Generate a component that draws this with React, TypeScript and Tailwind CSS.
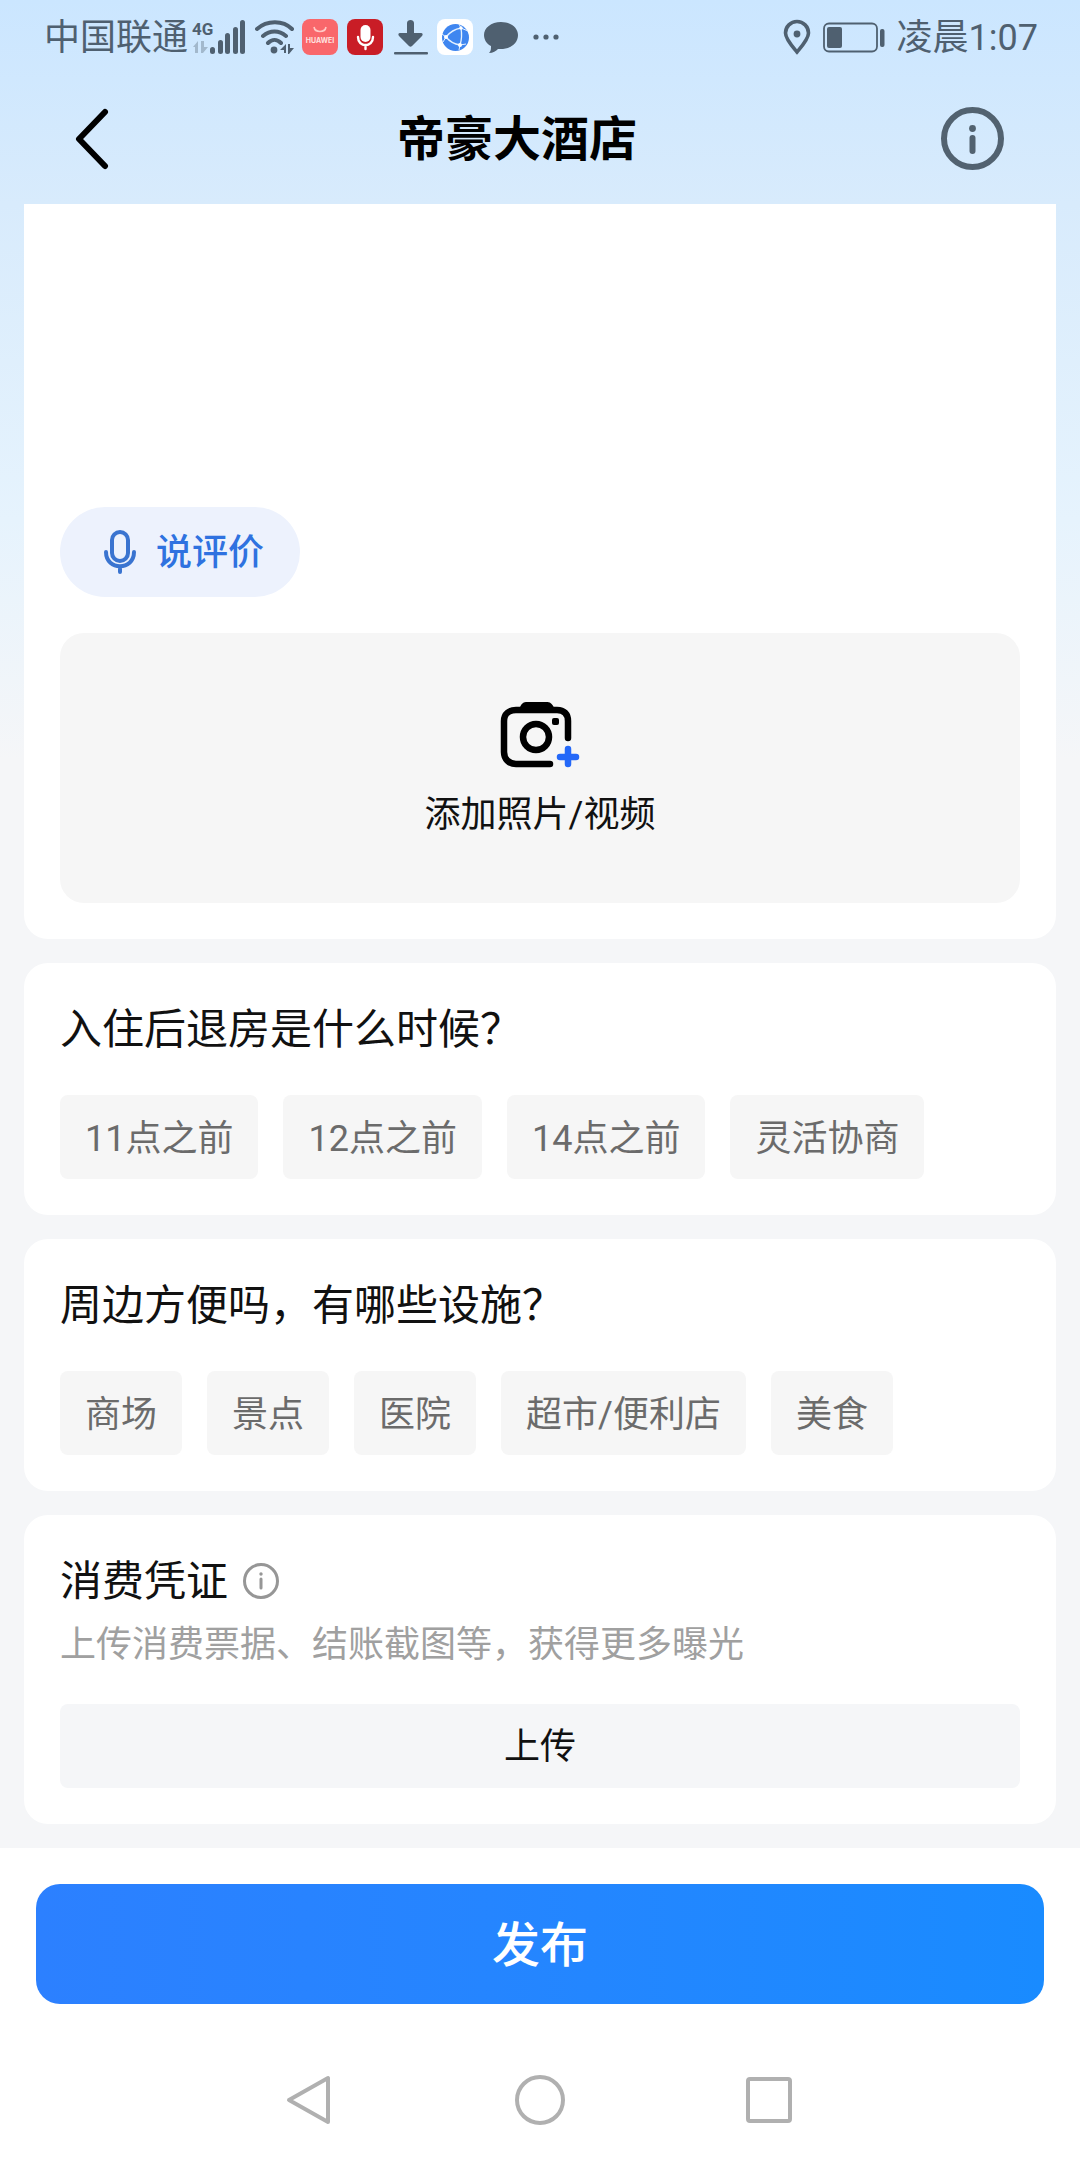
import { useState } from 'react';
import type { ReactNode } from 'react';

const checkoutOptions = ['11点之前', '12点之前', '14点之前', '灵活协商'];
const facilityOptions = ['商场', '景点', '医院', '超市/便利店', '美食'];

function StatusBar() {
  return (
    <div className="flex h-[74px] items-center justify-between pl-11 pr-[42px] text-4xl text-[#4f6070]">
      <div className="flex items-center">
        <span className="pt-0.5">中国联通</span>
        <svg className="ml-1 h-9 w-[55px]" viewBox="0 0 55 36" fill="currentColor">
          <text x="0" y="16" fontSize="17" fontWeight="700" fontFamily="Roboto, sans-serif">4G</text>
          <path d="M1 28l5-6v12H3v-6zM9 22h3v6h4l-5 6H9z" opacity=".35" />
          <rect x="18" y="28" width="5" height="7" rx="2.5" />
          <rect x="26" y="21" width="5" height="14" rx="2.5" />
          <rect x="33" y="14" width="5" height="21" rx="2.5" />
          <rect x="41" y="8" width="5" height="27" rx="2.5" />
          <rect x="48" y="1" width="5" height="34" rx="2.5" />
        </svg>
        <svg className="ml-2 h-9 w-10" viewBox="0 0 40 36" fill="none" stroke="currentColor" strokeWidth="4" strokeLinecap="round">
          <path d="M2 10c10-9 26-9 35 0M8 17c7-6 16-6 23 0M13 24c4-4 9-4 13 0" />
          <circle cx="19" cy="31" r="3.400" fill="currentColor" stroke="none" />
          <path d="M25 31l6-6v9h-2v-3zM33 25h2v4h4l-5 6h-1z" fill="currentColor" stroke="none" />
        </svg>
        <svg className="ml-[7px] size-9" viewBox="0 0 36 36">
          <rect width="36" height="36" rx="8" fill="#f9676b" />
          <path d="M12 8c1 6 11 6 12 0" fill="none" stroke="#ffc9c6" strokeWidth="1.6" />
          <text x="18" y="24" textAnchor="middle" fontSize="7" fontWeight="700" fontFamily="Inter, sans-serif" fill="#ffe3e0">HUAWEI</text>
        </svg>
        <svg className="ml-[9px] size-9" viewBox="0 0 36 36">
          <rect width="36" height="36" rx="8" fill="#c91d26" />
          <rect x="13.500" y="6" width="10" height="17" rx="5" fill="#fff" />
          <path d="M11 18c0 11 15 11 15 0M18.500 26v4" fill="none" stroke="#fff" strokeWidth="2.400" strokeLinecap="round" />
        </svg>
        <svg className="ml-[11px] h-9 w-[34px]" viewBox="0 0 34 36" fill="currentColor">
          <path d="M13 4c0-4 7-4 7 0v10h7c2 0 2 2 1 3L18 27c-1 1-2 1-3 0L5 17c-1-1-1-3 1-3h7z" />
          <rect x="0" y="33" width="34" height="2.400" rx="1" />
        </svg>
        <svg className="ml-[9px] size-9" viewBox="0 0 36 36">
          <rect width="36" height="36" rx="8" fill="#fff" />
          <circle cx="18.500" cy="18.500" r="13.500" fill="#3f86f0" />
          <path d="M9 18c4-5 9-8 15-9M9 18c4 5 8 7 14 8M24 9c1 6 1 11-1 17" fill="none" stroke="#e4f1ff" strokeWidth="1.300" />
          <path d="M22 5l2 4 7 3M5 15l4 3-3 5M22 31l1-5 6-1" fill="none" stroke="#e4f1ff" strokeWidth="1" />
          <circle cx="24" cy="9" r="1.700" fill="#fff" />
          <circle cx="9" cy="18" r="2" fill="#fff" />
          <circle cx="23" cy="26" r="2" fill="#fff" />
        </svg>
        <svg className="ml-[11px] h-9 w-[34px]" viewBox="0 0 34 36" fill="currentColor">
          <path d="M17 3C7 3 0 9 0 16c0 5 3 9 7 11 0 3 0 5-2 7 4 0 7-2 9-4 11 1 20-5 20-14C34 9 27 3 17 3z" />
        </svg>
        <svg className="ml-[14px] h-9 w-7" viewBox="0 0 28 36" fill="currentColor">
          <circle cx="4" cy="18" r="2.600" />
          <circle cx="14" cy="18" r="2.600" />
          <circle cx="24" cy="18" r="2.600" />
        </svg>
      </div>
      <div className="flex items-center">
        <svg className="h-9 w-7" viewBox="0 0 28 36" fill="none" stroke="currentColor" strokeWidth="3.600">
          <path d="M14 33C9 27 2.500 20 2.500 14a11.500 11.500 0 0 1 23 0C25.500 20 19 27 14 33z" />
          <circle cx="14" cy="15" r="3.400" fill="currentColor" stroke="none" />
        </svg>
        <svg className="ml-3 h-9 w-[62px]" viewBox="0 0 62 36" fill="currentColor">
          <rect x="1" y="4.500" width="53" height="28" rx="5" fill="none" stroke="currentColor" strokeWidth="1.800" />
          <rect x="4" y="8" width="15" height="21" rx="2" />
          <rect x="57" y="10" width="4.500" height="18" rx="2" />
        </svg>
        <span className="ml-3 pt-0.5">凌晨1:07</span>
      </div>
    </div>
  );
}

function Chips({ name, options }: { name: string; options: string[] }) {
  const [picked, setPicked] = useState('');

  return (
    <div className="mt-9 flex flex-wrap gap-[25px]" role="group" aria-label={name}>
      {options.map((option) => (
        <button
          key={option}
          type="button"
          aria-pressed={picked === option}
          onClick={() => setPicked(option)}
          className="h-[84px] rounded-lg bg-[#f6f6f6] px-[25px] pt-1 text-4xl text-[#6b6b6b]"
        >
          {option}
        </button>
      ))}
    </div>
  );
}

function Card({ children }: { children: ReactNode }) {
  return <section className="rounded-3xl bg-white p-9">{children}</section>;
}

function CardTitle({ children }: { children: ReactNode }) {
  return <h2 className="pt-0.5 text-[42px] leading-[58px]">{children}</h2>;
}

export default function App() {
  return (
    <div className="flex min-h-screen flex-col bg-[#f5f6f8] bg-[linear-gradient(180deg,#cbe6ff_0px,#d8ebfc_204px,#e6f3fd_520px,#f5f6f8_760px)] font-['Roboto','Noto_Sans_CJK_SC',sans-serif] text-[#111111]">
      <StatusBar />

      <header className="flex h-[130px] items-center px-[75px]">
        <button type="button" aria-label="返回">
          <svg className="h-16 w-9" viewBox="0 0 36 64" fill="none" stroke="#000" strokeWidth="6" strokeLinecap="round" strokeLinejoin="round">
            <path d="M30 5L4 32l26 27" />
          </svg>
        </button>
        <h1 className="grow pt-0.5 pr-[18px] text-center text-5xl font-bold text-black">帝豪大酒店</h1>
        <button type="button" aria-label="说明">
          <svg className="size-16" viewBox="0 0 64 64" fill="none" stroke="#526270" strokeWidth="6" strokeLinecap="round">
            <circle cx="31.500" cy="31.500" r="28.500" />
            <path d="M31.500 31v13" />
            <circle cx="31.500" cy="21.500" r="3.400" fill="#526270" stroke="none" />
          </svg>
        </button>
      </header>

      <main className="flex flex-col gap-6 px-6 pb-6">
        <section className="rounded-b-3xl bg-white px-9 pb-9">
          <textarea aria-label="评价内容" className="block h-[303px] w-full resize-none py-6 text-4xl outline-none" />
          <button type="button" className="flex h-[90px] items-center rounded-full bg-[#edf2fd] pl-11 pr-9 text-4xl font-medium text-[#2f72e0]">
            <svg className="h-11 w-8" viewBox="0 0 32 44" fill="none" stroke="#3a74d0" strokeWidth="4" strokeLinecap="round">
              <rect x="8" y="2" width="16" height="29" rx="8" />
              <path d="M2 22c0 19 28 19 28 0M16 38v4" />
            </svg>
            <span className="ml-5 pt-0.5">说评价</span>
          </button>
          <button type="button" className="mt-9 flex h-[270px] w-full flex-col items-center rounded-3xl bg-[#f6f6f6] pt-[68px] text-4xl">
            <svg className="h-[68px] w-20" viewBox="0 0 80 68" fill="none" stroke="#000" strokeWidth="6.500" strokeLinecap="round">
              <path d="M50 63H16c-7 0-12-5-12-12V20C4 13 9 9 16 9h41c7 0 11 4 11 11v17" />
              <path d="M20 7c1-5 4-6 7-6h19c4 0 6 1 8 6v4H20z" fill="#000" stroke="none" />
              <circle cx="36" cy="36" r="13" />
              <rect x="52" y="17" width="7" height="7" rx="2" fill="#000" stroke="none" />
              <path d="M68 48v15M60 56h16" stroke="#2468f8" />
            </svg>
            <span className="mt-[18px] leading-[56px]">添加照片/视频</span>
          </button>
        </section>

        <Card>
          <CardTitle>入住后退房是什么时候？</CardTitle>
          <Chips name="退房时间" options={checkoutOptions} />
        </Card>

        <Card>
          <CardTitle>周边方便吗，有哪些设施？</CardTitle>
          <Chips name="周边设施" options={facilityOptions} />
        </Card>

        <Card>
          <div className="flex items-center gap-[15px]">
            <CardTitle>消费凭证</CardTitle>
            <button type="button" aria-label="凭证说明">
              <svg className="size-9" viewBox="0 0 36 36" fill="none" stroke="#969696" strokeWidth="3" strokeLinecap="round">
                <circle cx="18" cy="18" r="16.500" />
                <path d="M18 16v9" />
                <circle cx="18" cy="11" r="1.700" fill="#969696" stroke="none" />
              </svg>
            </button>
          </div>
          <p className="mt-[9px] pt-0.5 text-4xl leading-[46px] text-[#a0a0a0]">上传消费票据、结账截图等，获得更多曝光</p>
          <button type="button" className="mt-9 h-[84px] w-full rounded-lg bg-[#f5f6f8] pt-0.5 text-4xl">上传</button>
        </Card>
      </main>

      <footer className="grow bg-white px-9 pt-9">
        <button type="button" className="h-[120px] w-full rounded-3xl bg-linear-to-r from-[#2c80ff] to-[#198bff] pt-1 text-5xl font-medium text-white">
          发布
        </button>
        <nav className="flex justify-center gap-[180px] pt-[71px] pb-9">
          <button type="button" aria-label="后退">
            <svg className="size-[50px]" viewBox="0 0 50 50" fill="none" stroke="#b0b0b0" strokeWidth="4" strokeLinejoin="round">
              <path d="M43 3v44L4 25z" />
            </svg>
          </button>
          <button type="button" aria-label="主页">
            <svg className="size-[50px]" viewBox="0 0 50 50" fill="none" stroke="#b0b0b0" strokeWidth="4">
              <circle cx="25" cy="25" r="23" />
            </svg>
          </button>
          <button type="button" aria-label="最近任务">
            <svg className="size-[50px]" viewBox="0 0 50 50" fill="none" stroke="#b0b0b0" strokeWidth="4">
              <rect x="3" y="4" width="42" height="42" rx="2" />
            </svg>
          </button>
        </nav>
      </footer>
    </div>
  );
}
